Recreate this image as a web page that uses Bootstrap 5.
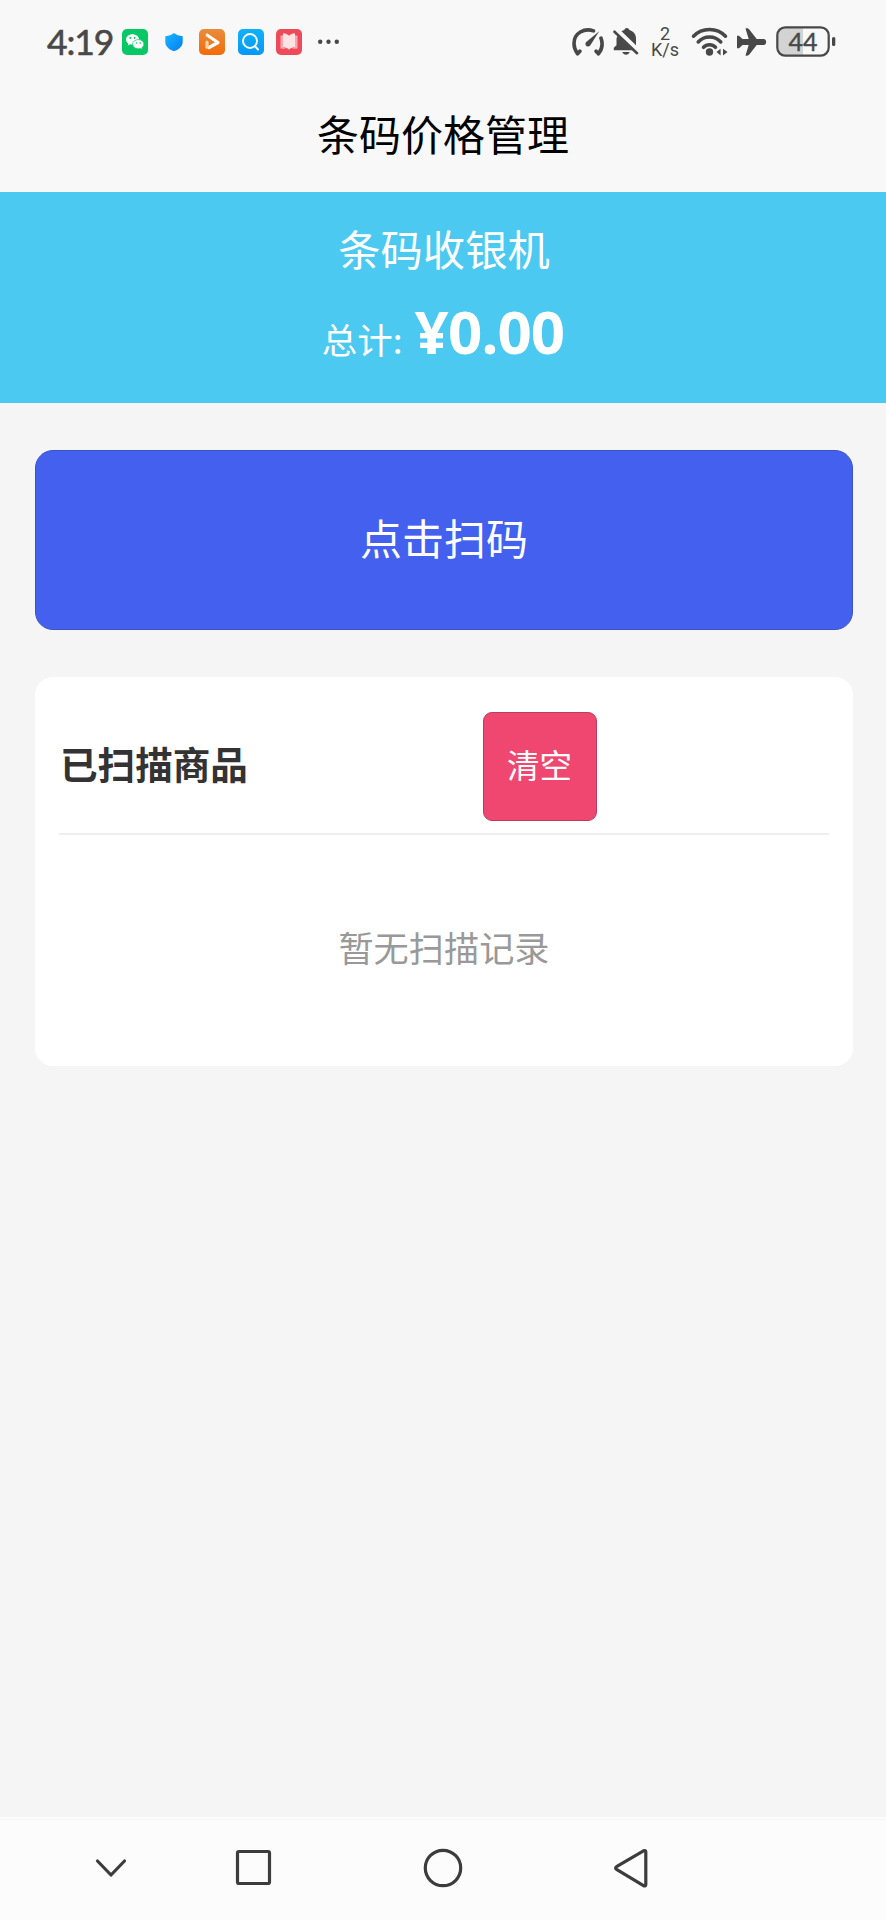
<!DOCTYPE html>
<html lang="zh-CN">
<head>
<meta charset="utf-8">
<meta name="viewport" content="width=device-width, initial-scale=1">
<title>条码价格管理</title>
<link href="https://cdn.jsdelivr.net/npm/bootstrap@5.3.0/dist/css/bootstrap.min.css" rel="stylesheet">
<style>
  body { background: #f5f5f5; font-family: "Noto Sans CJK SC", sans-serif; color: #333; }
  .status-bar { height: 84px; padding-left: 47px; background: #f8f8f8; color: #484848; }
  .status-bar svg { display: block; flex: none; }
  .clock { font: 35.5px/1 Lato, sans-serif; width: 75px; letter-spacing: -1.1px; -webkit-text-stroke: .6px #484848; }
  .app-icons { gap: 12.6px; }
  .net-speed { font: 18px/16px Roboto, sans-serif; width: 28px; margin: 0 12px 0 12px; }
  .page-title { height: 108px; background: #f8f8f8; color: #000; font-size: 42px; line-height: 60px; padding-top: 19px; }
  .total-panel { height: 211px; background: #4cc9f0; padding-top: 26px; }
  .total-panel h1 { font-size: 42.3px; line-height: 60px; font-weight: 400; padding-left: 2px; }
  .total-row { padding-top: 13px; }
  .total-label { font-size: 35.5px; line-height: 80px; }
  .total-value { font: 700 60px/80px "Noto Sans", sans-serif; letter-spacing: -.9px; margin-left: 12px; }
  .main-area { padding: 47px 33px 0 35px; }
  .scan-btn { height: 180px; background: #4361ee; border: 1px solid #3c53c4; border-radius: 18px; font-size: 42px; line-height: 60px; }
  .scan-btn span { display: block; padding-bottom: 7px; }
  .record-card { height: 389px; margin-top: 47px; border-radius: 18px; padding: 35px 24px; }
  .record-head { height: 123px; border-bottom: 2px solid #eee; }
  .record-head h2 { font-size: 37.6px; line-height: 54px; font-weight: 700; width: 423.500px; padding: 24px 0 0 1px; }
  .clear-btn { width: 114px; height: 109px; background: #ef476f; border: 1px solid #bd3c5c; border-radius: 9px; font-size: 32.5px; line-height: 46px; }
  .clear-btn span { display: block; padding-bottom: 5px; }
  .empty-note { font-size: 35.2px; line-height: 50px; color: #999; padding-top: 87px; }
  .nav-keys { height: 103px; background: #fcfcfc; border-top: 2px solid #fdfdfd; box-shadow: inset 0 1px #f5f5f5; padding: 0 0 3px 94px; }
  .nav-keys svg { display: block; fill: none; stroke: #3c3c3c; stroke-width: 3.2; stroke-linecap: round; stroke-linejoin: round; }
</style>
</head>
<body class="d-flex flex-column min-vh-100">
<header>
  <div class="status-bar d-flex align-items-center">
    <div class="clock">4:19</div>
    <div class="app-icons d-flex">
      <svg width="26" height="26" viewBox="0 0 26 26"><rect width="26" height="26" rx="5" fill="#07c864"/><path d="M10.500 5.200C6.800 5.200 4 7.500 4 10.400c0 1.700.9 3 2.300 4l-.5 2 2.300-1.100c.8.200 1.500.3 2.400.3 3.600 0 6.500-2.300 6.500-5.200s-2.900-5.200-6.500-5.200z" fill="#fff"/><path d="M16.300 10.600c-3.200 0-5.700 2-5.700 4.600s2.500 4.600 5.700 4.600c.7 0 1.400-.1 2-.3l2 1-.5-1.700c1.300-.9 2.100-2.100 2.100-3.600 0-2.600-2.500-4.600-5.600-4.600z" fill="#fff" stroke="#07c864" stroke-width=".7"/><circle cx="8.300" cy="9" r=".9" fill="#07c864"/><circle cx="12.600" cy="9" r=".9" fill="#07c864"/><circle cx="14.500" cy="14" r=".8" fill="#07c864"/><circle cx="18.200" cy="14" r=".8" fill="#07c864"/></svg>
      <svg width="26" height="26" viewBox="0 0 26 26"><defs><linearGradient id="gs" x2="1" y2="1"><stop stop-color="#16b8ff"/><stop offset="1" stop-color="#087cf5"/></linearGradient></defs><path d="M13 4c2.500 1.900 5.200 2.800 8.700 3.200v5.500c0 4.700-3.700 7.700-8.700 9.500-5-1.800-8.700-4.800-8.700-9.500V7.200C7.800 6.800 10.500 5.900 13 4z" fill="url(#gs)"/></svg>
      <svg width="26" height="26" viewBox="0 0 26 26"><defs><linearGradient id="go" x2="0" y2="1"><stop stop-color="#e98c3b"/><stop offset="1" stop-color="#f36b09"/></linearGradient></defs><rect width="26" height="26" rx="5" fill="url(#go)"/><path d="M8.300 6.200l10.700 7.300-9 5" fill="none" stroke="#fff" stroke-width="3.200" stroke-linecap="round" stroke-linejoin="round"/><path d="M8 13v5.200" stroke="#ffd1a6" stroke-width="3.200" stroke-linecap="round"/></svg>
      <svg width="26" height="26" viewBox="0 0 26 26"><defs><linearGradient id="gb" x2="0" y2="1"><stop stop-color="#0eb2fa"/><stop offset="1" stop-color="#0797f6"/></linearGradient></defs><rect width="26" height="26" rx="5" fill="url(#gb)"/><circle cx="12" cy="12" r="7" fill="none" stroke="#fff" stroke-width="1.900"/><path d="M16.800 17l3.200 3.500" stroke="#fff" stroke-width="2" stroke-linecap="round"/></svg>
      <svg width="26" height="26" viewBox="0 0 26 26"><rect width="26" height="26" rx="5" fill="#ef4a59"/><path d="M4.500 6.800L7 6.300v12.500l6 2 6-2V6.300l2.500.5v12.700l-6.500.4-2 1.300-2-1.300-6.500-.4z" fill="#f9aab0"/><path d="M7 4.300c2.600.2 4.600 1 6 2.400 1.400-1.400 3.400-2.200 6-2.400v14.200c-2.600 0-4.500.6-6 1.700-1.500-1.100-3.400-1.700-6-1.700z" fill="#fde4e3"/></svg>
      <svg width="26" height="26" viewBox="0 0 26 26" fill="#484848"><circle cx="5.200" cy="12.800" r="2.200"/><circle cx="13.500" cy="12.800" r="2.200"/><circle cx="21.800" cy="12.800" r="2.200"/></svg>
    </div>
    <div class="d-flex align-items-center ms-auto" style="padding-right:50px">
      <svg width="34" height="30" viewBox="0 0 34 30" fill="none" stroke="#484848" stroke-width="3.600" stroke-linecap="round" stroke-linejoin="round"><path d="M22.500 3.900C13.500.7 3 6 3 16.500c0 3.700 1.300 7.300 3.600 10.300l2.300-2.600M30 11.200c2 5.500 1.200 11-2.600 15.600l-2.300-2.600"/><path d="M28.200 4.200L15.200 15c-2.400 2.800 1.300 6.300 4 3.600z" fill="#484848" stroke="none"/></svg>
      <svg class="ms-2" width="26" height="30" viewBox="0 0 26 30" fill="#484848"><path d="M8.500 4.200c1-.7 2-1 2.800-1.200.3-1.200 1.200-2 2.500-2s2.200.8 2.500 2c4 1 6.700 4.300 6.700 8.500v6.800zM4.500 9l15 14.300H.8v-2.500l2.700-2.600V12c0-1.100.4-2.100 1-3zM9.300 25h7.400c-1.500 3.600-5.900 3.600-7.400 0z"/><path d="M1.500 4.700l22.500 21.500" stroke="#484848" stroke-width="2.600" stroke-linecap="round"/></svg>
      <div class="net-speed text-center"><div>2</div><div>K/s</div></div>
      <svg width="37" height="30" viewBox="0 0 37 30" fill="none" stroke="#484848" stroke-width="3.500" stroke-linecap="round"><path d="M2.500 9.200c8.500-9 23.500-9 32 0M7.200 15c6-6.700 16.600-6.700 22.600 0M12.500 20.300c3.200-3.400 8.800-3.400 12 0"/><circle cx="18.500" cy="25" r="3.700" fill="#484848" stroke="none"/><path d="M29.600 21.700v6.800L25.500 25zM32 21.700v6.800l4.500-3.500z" fill="#484848" stroke="none"/></svg>
      <svg style="margin-left:8px" width="31" height="30" viewBox="0 0 31 30"><path d="M9.500 1.500c1.800-.7 3.200 0 4 1.200l7.200 9.300h7c3.300 0 3.300 6 0 6h-7l-7.200 9.300c-.8 1.200-2.200 1.900-4 1.200L12.700 18H6.500L3 21.300H1V8.700h2L6.500 12h6.200z" fill="#484848"/></svg>
      <svg style="margin-left:9px" width="60" height="32" viewBox="0 0 60 32"><path d="M27 2H10a8 8 0 0 0-8 8v12a8 8 0 0 0 8 8h17z" fill="#d3d3d3"/><rect x="1.300" y="1.300" width="51.400" height="28.400" rx="8" fill="none" stroke="#484848" stroke-width="2.200"/><rect x="56" y="11" width="3.300" height="9" rx="1.500" fill="#484848"/><text x="27" y="24.800" text-anchor="middle" font-family="Lato, sans-serif" font-size="25" fill="#484848" stroke="#484848" stroke-width=".4">44</text></svg>
    </div>
  </div>
  <div class="page-title text-center">条码价格管理</div>
</header>
<section class="total-panel text-center text-white">
  <h1 class="m-0">条码收银机</h1>
  <div class="total-row d-flex justify-content-center align-items-baseline">
    <span class="total-label">总计:</span><span class="total-value">¥0.00</span>
  </div>
</section>
<main class="main-area flex-grow-1">
  <button type="button" class="scan-btn btn d-block w-100 p-0 text-white"><span>点击扫码</span></button>
  <section class="record-card bg-white">
    <div class="record-head d-flex align-items-start">
      <h2 class="m-0">已扫描商品</h2>
      <button type="button" class="clear-btn btn p-0 text-white"><span>清空</span></button>
    </div>
    <div class="empty-note text-center">暂无扫描记录</div>
  </section>
</main>
<footer class="nav-keys d-flex align-items-center">
  <svg width="34" height="40" viewBox="0 0 34 40"><path d="M3.500 13L17 27l13.500-14"/></svg>
  <svg style="margin-left:106px" width="40" height="40" viewBox="0 0 40 40"><rect x="3.500" y="3.500" width="32" height="32" rx="1.500"/></svg>
  <svg style="margin-left:149px" width="40" height="40" viewBox="0 0 40 40"><circle cx="20" cy="20" r="17.700"/></svg>
  <svg style="margin-left:150px" width="40" height="40" viewBox="0 0 40 40"><path d="M3.500 18.700q-1.800 1.300 0 2.600L30.500 37.700q2.300 1 2.300-1.200V4q0-2.200-2.300-1.200z"/></svg>
</footer>
<script src="https://cdn.jsdelivr.net/npm/bootstrap@5.3.0/dist/js/bootstrap.bundle.min.js"></script>
</body>
</html>
